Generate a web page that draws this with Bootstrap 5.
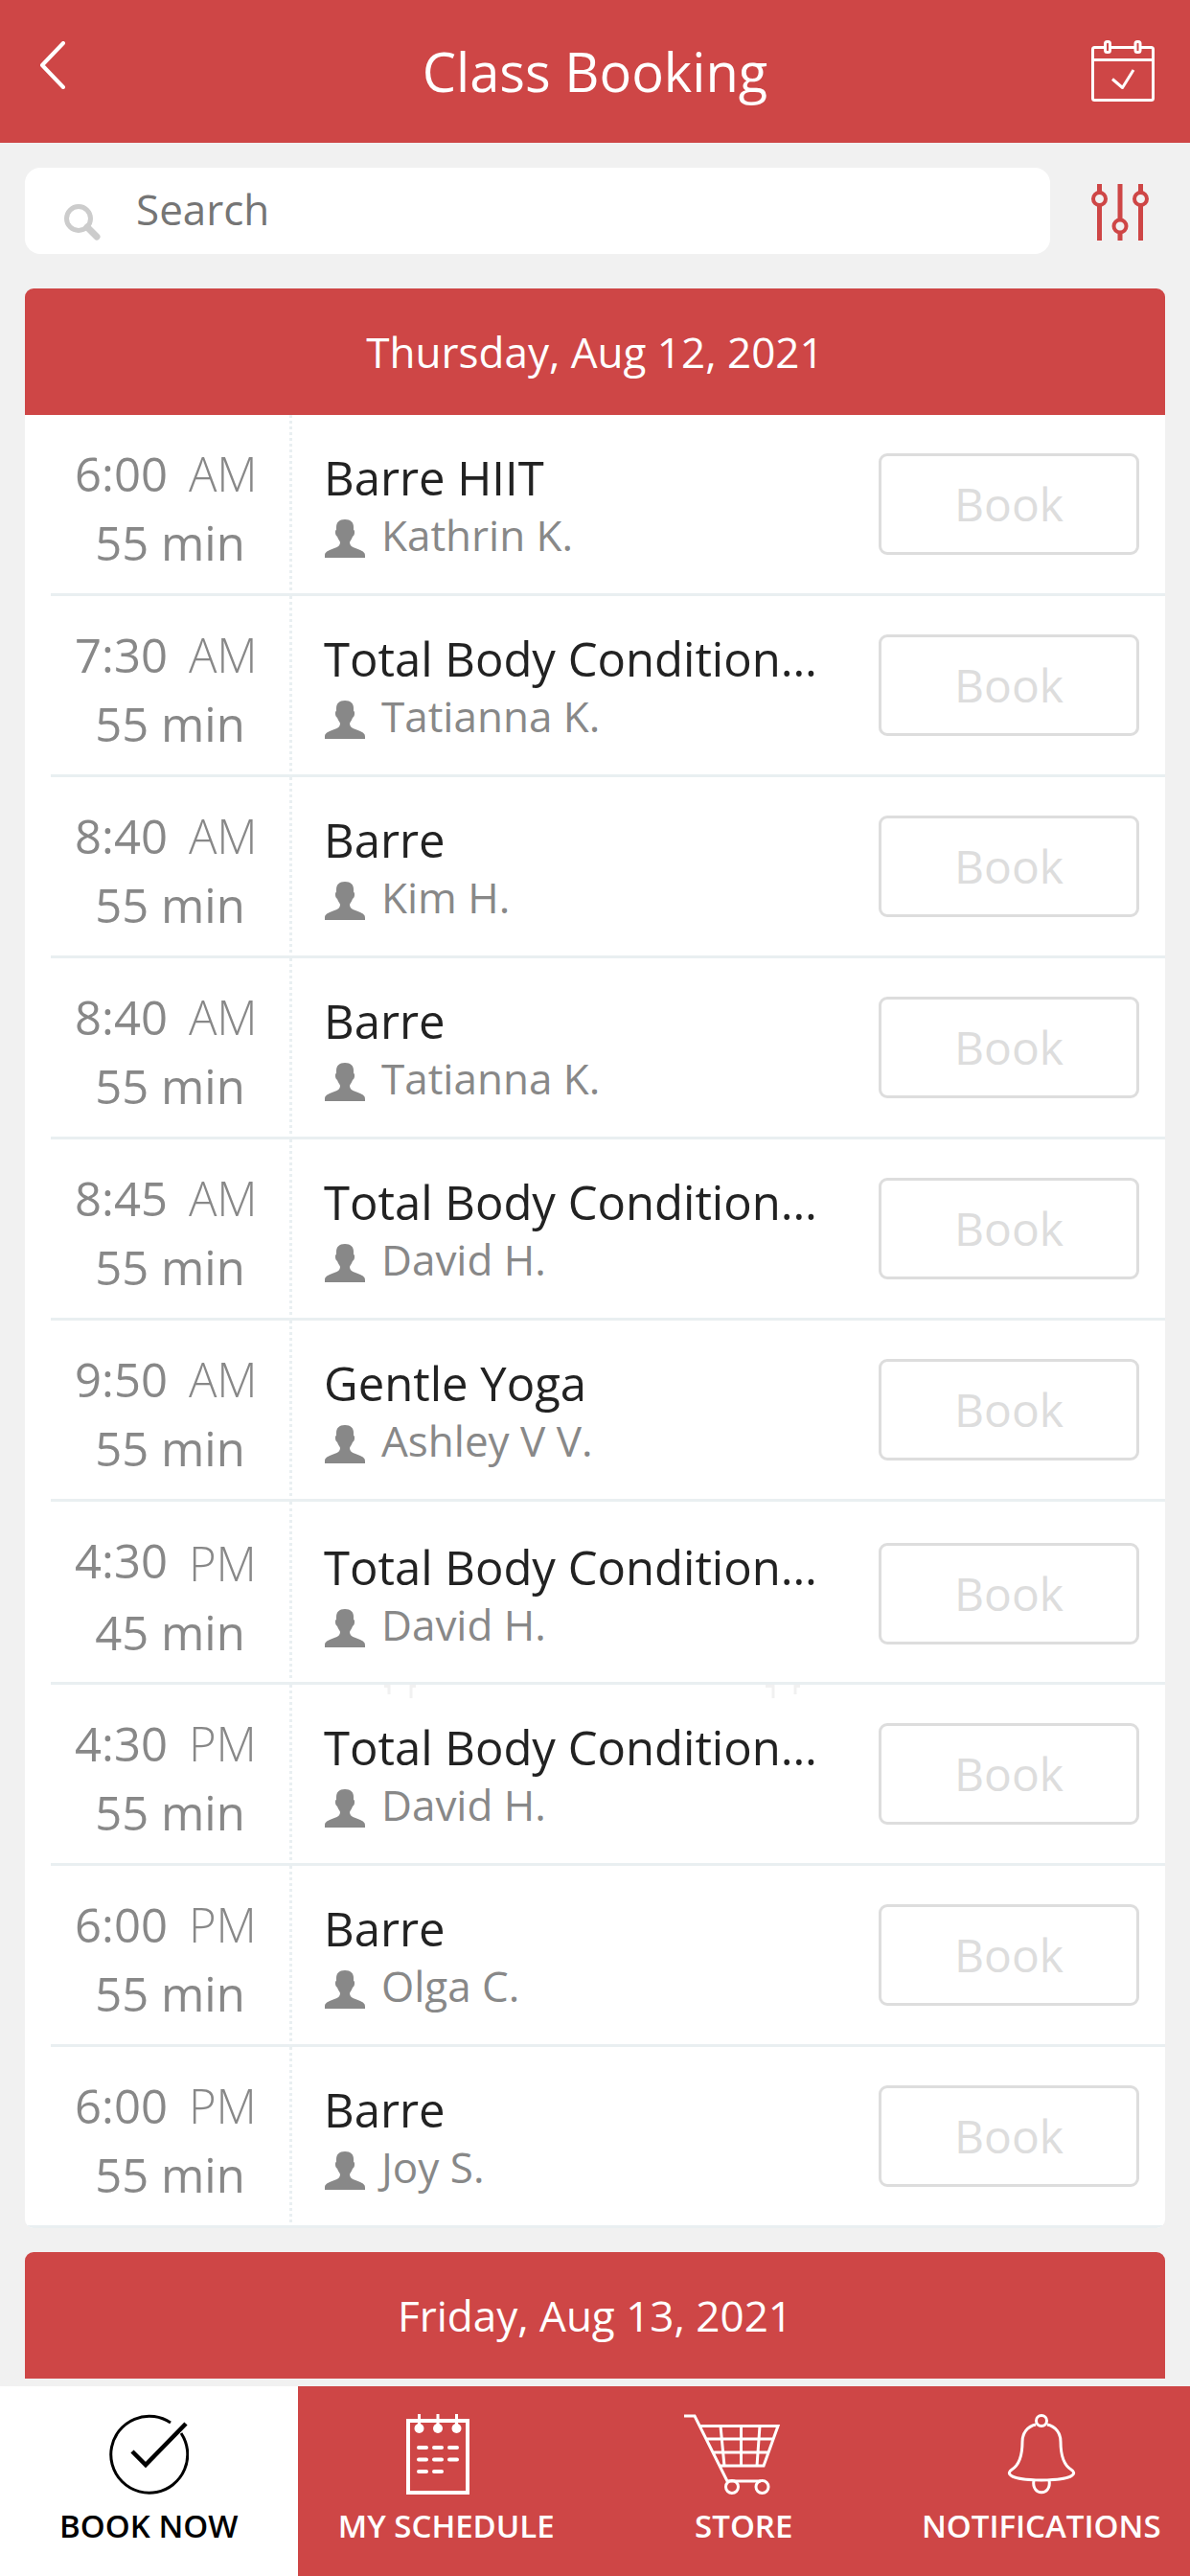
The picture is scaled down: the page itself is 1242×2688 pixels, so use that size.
<!DOCTYPE html>
<html lang="en">
<head>
<meta charset="utf-8">
<meta name="viewport" content="width=device-width, initial-scale=1">
<title>Class Booking</title>
<link href="https://cdn.jsdelivr.net/npm/bootstrap@5.3.0/dist/css/bootstrap.min.css" rel="stylesheet">
<style>
  :root { --brand: #ce4646; --line: #e9eff1; --muted: #888; }
  body { background: #f1f1f1; font-family: "Open Sans", "Noto Sans", sans-serif; color: #222; }
  svg { display: block; flex: none; }
  .brand-bg { background: var(--brand); color: #fff; }
  .top-bar { padding: 36px 37px 37px; }
  .top-bar h1 { font-size: 56px; line-height: 76px; font-weight: 400; }
  .bar-side { width: 72px; }
  .bar-side.back-link { padding: 0 0 12px 3px; }
  .page-body { padding: 26px 26px 8px; }
  .search-line { margin-bottom: 36px; }
  .search-box { height: 90px; border-radius: 16px; padding: 0 40px; }
  .search-box svg { margin-top: 24px; }
  .search-box input { font: inherit; font-size: 44px; line-height: 60px; padding: 0 0 4px 36px; color: #222; outline: 0; }
  .search-box input::placeholder { color: #757575; opacity: 1; }
  .filter-btn { width: 120px; padding: 3px 0 0 43px; }
  .day-head { font-size: 44px; line-height: 60px; font-weight: 400; padding: 36px 0; border-radius: 9px 9px 0 0; }
  .day-block { margin-bottom: 25px; }
  .slots { border-radius: 0 0 9px 9px; overflow: hidden; }
  .slot { height: 189px; }
  .slot::after { content: ""; position: absolute; left: 27px; right: 0; bottom: 0; height: 3px; background: var(--line); }
  .slot:last-child::after { left: 0; }
  .slot-time { width: 279px; padding: 25px 0 0 27px; border-right: 3px dotted var(--line); font-size: 49px; line-height: 72px; color: var(--muted); }
  .slot-clock { gap: 22px; padding-left: 25px; }
  .slot-clock span { font-weight: 300; }
  .slot-info { min-width: 0; padding: 31px 0 0 33px; margin-right: 57px; }
  .slot-info h3 { font-size: 49px; line-height: 68px; font-weight: 400; }
  .slot-coach { font-size: 44px; line-height: 52px; color: var(--muted); gap: 17px; }
  .slot-coach svg { margin: 7px 0 0 1px; }
  .book-btn { width: 272px; height: 106px; margin: 40px 27px 0 0; padding: 0; border: 3px solid #ddd; border-radius: 9px; font-size: 48px; line-height: 66px; }
  .book-btn:disabled { color: #ddd; border-color: #ddd; opacity: 1; }
  .slot-tall { height: 191px; }
  .slot-tall .slot-clock span { padding-top: 3px; }
  .slot-tall .slot-info { padding-top: 34px; }
  .slot-tall .book-btn { margin-top: 43px; }
  .edge-trace { left: 375px; top: 0; }
  .tab-bar { height: 198px; }
  .tab-bar a { padding-top: 29px; gap: 11px; font-size: 33px; line-height: 44px; font-weight: 600; color: #fff; white-space: nowrap; }
  .tab-bar a.current { background: #fff; color: #000; }
</style>
</head>
<body>
<svg width="0" height="0" class="position-absolute" aria-hidden="true">
  <symbol id="person" viewBox="0 0 42 40"><path fill="#888" d="M21 0c6 0 9 3 9 8v3c1 0 1 1 1 3s-1 3-2 4c-1 3-3 5-3 6 0 3 2 5 6 6l5 2c4 2 5 3 5 6v2H0v-2c0-3 1-4 5-6l5-2c4-1 6-3 6-6 0-1-2-3-3-6-1-1-2-2-2-4s0-3 1-3V8c0-5 3-8 9-8z"/></symbol>
</svg>
<div class="d-flex flex-column min-vh-100">
  <header class="brand-bg top-bar d-flex align-items-center justify-content-between">
    <a href="#" class="bar-side back-link" aria-label="Back">
      <svg width="32" height="50" viewBox="0 0 32 50" fill="none" stroke="#fff" stroke-width="4" stroke-linecap="round" stroke-linejoin="round"><path d="M26 2 4 25l22 23"/></svg>
    </a>
    <h1 class="m-0">Class Booking</h1>
    <a href="#" class="bar-side d-flex justify-content-end" aria-label="My bookings">
      <svg width="66" height="64" viewBox="0 0 66 64" fill="none" stroke="#fff" stroke-width="3" stroke-linejoin="round"><path d="M14 7.500H3.500a2 2 0 0 0-2 2V60.500a2 2 0 0 0 2 2h59a2 2 0 0 0 2-2V9.500a2 2 0 0 0-2-2H52M20 7.500H46M2 20.500H64"/><rect x="14.500" y="1.500" width="5" height="11" rx="2"/><rect x="46" y="1.500" width="5" height="11" rx="2"/><path d="M22 40.500 32.500 49.500 44 31"/></svg>
    </a>
  </header>

  <main class="page-body flex-grow-1">
    <div class="search-line d-flex align-items-center">
      <label class="search-box bg-white d-flex align-items-center flex-grow-1">
        <svg width="40" height="40" viewBox="0 0 40 40" fill="none" stroke="#ccc"><circle cx="16" cy="16" r="12.500" stroke-width="5"/><path d="M25 25 35 35" stroke-width="7" stroke-linecap="round"/></svg>
        <input type="search" class="border-0 bg-transparent flex-grow-1" placeholder="Search" aria-label="Search classes">
      </label>
      <button type="button" class="filter-btn border-0 bg-transparent" aria-label="Filter">
        <svg width="60" height="60" viewBox="0 0 60 60" fill="none" stroke="#ce4646" stroke-width="5"><path d="M8.500 0V9M8.500 23V59M30 0V37M30 52V59M51.500 0V9M51.500 23V59"/><circle cx="8.500" cy="15.500" r="6.500" stroke-width="4"/><circle cx="30" cy="44" r="6.500" stroke-width="4"/><circle cx="51.500" cy="15.500" r="6.500" stroke-width="4"/></svg>
      </button>
    </div>

    <section class="day-block">
      <h2 class="day-head brand-bg text-center m-0">Thursday, Aug 12, 2021</h2>
      <ul class="slots bg-white list-unstyled m-0">
        <li class="slot d-flex align-items-start position-relative">
          <div class="slot-time flex-shrink-0 h-100"><div class="slot-clock d-flex">6:00<span>AM</span></div><div class="text-center">55 min</div></div>
          <div class="slot-info flex-fill"><h3 class="text-truncate m-0">Barre HIIT</h3><div class="slot-coach d-flex align-items-center"><svg width="42" height="40"><use href="#person"/></svg>Kathrin K.</div></div>
          <button type="button" class="btn book-btn flex-shrink-0" disabled>Book</button>
        </li>
        <li class="slot d-flex align-items-start position-relative">
          <div class="slot-time flex-shrink-0 h-100"><div class="slot-clock d-flex">7:30<span>AM</span></div><div class="text-center">55 min</div></div>
          <div class="slot-info flex-fill"><h3 class="text-truncate m-0">Total Body Conditioning</h3><div class="slot-coach d-flex align-items-center"><svg width="42" height="40"><use href="#person"/></svg>Tatianna K.</div></div>
          <button type="button" class="btn book-btn flex-shrink-0" disabled>Book</button>
        </li>
        <li class="slot d-flex align-items-start position-relative">
          <div class="slot-time flex-shrink-0 h-100"><div class="slot-clock d-flex">8:40<span>AM</span></div><div class="text-center">55 min</div></div>
          <div class="slot-info flex-fill"><h3 class="text-truncate m-0">Barre</h3><div class="slot-coach d-flex align-items-center"><svg width="42" height="40"><use href="#person"/></svg>Kim H.</div></div>
          <button type="button" class="btn book-btn flex-shrink-0" disabled>Book</button>
        </li>
        <li class="slot d-flex align-items-start position-relative">
          <div class="slot-time flex-shrink-0 h-100"><div class="slot-clock d-flex">8:40<span>AM</span></div><div class="text-center">55 min</div></div>
          <div class="slot-info flex-fill"><h3 class="text-truncate m-0">Barre</h3><div class="slot-coach d-flex align-items-center"><svg width="42" height="40"><use href="#person"/></svg>Tatianna K.</div></div>
          <button type="button" class="btn book-btn flex-shrink-0" disabled>Book</button>
        </li>
        <li class="slot d-flex align-items-start position-relative">
          <div class="slot-time flex-shrink-0 h-100"><div class="slot-clock d-flex">8:45<span>AM</span></div><div class="text-center">55 min</div></div>
          <div class="slot-info flex-fill"><h3 class="text-truncate m-0">Total Body Conditioning</h3><div class="slot-coach d-flex align-items-center"><svg width="42" height="40"><use href="#person"/></svg>David H.</div></div>
          <button type="button" class="btn book-btn flex-shrink-0" disabled>Book</button>
        </li>
        <li class="slot d-flex align-items-start position-relative">
          <div class="slot-time flex-shrink-0 h-100"><div class="slot-clock d-flex">9:50<span>AM</span></div><div class="text-center">55 min</div></div>
          <div class="slot-info flex-fill"><h3 class="text-truncate m-0">Gentle Yoga</h3><div class="slot-coach d-flex align-items-center"><svg width="42" height="40"><use href="#person"/></svg>Ashley V V.</div></div>
          <button type="button" class="btn book-btn flex-shrink-0" disabled>Book</button>
        </li>
        <li class="slot slot-tall d-flex align-items-start position-relative">
          <div class="slot-time flex-shrink-0 h-100"><div class="slot-clock d-flex">4:30<span>PM</span></div><div class="text-center">45 min</div></div>
          <div class="slot-info flex-fill"><h3 class="text-truncate m-0">Total Body Conditioning</h3><div class="slot-coach d-flex align-items-center"><svg width="42" height="40"><use href="#person"/></svg>David H.</div></div>
          <button type="button" class="btn book-btn flex-shrink-0" disabled>Book</button>
        </li>
        <li class="slot d-flex align-items-start position-relative">
          <svg class="edge-trace position-absolute" width="434" height="14" fill="none" stroke="#f1f1f1" stroke-width="3" aria-hidden="true"><path d="M0 1.500H5V10M33 1.500H28V14M398 1.500H406V14M434 1.500H429V10"/></svg>
          <div class="slot-time flex-shrink-0 h-100"><div class="slot-clock d-flex">4:30<span>PM</span></div><div class="text-center">55 min</div></div>
          <div class="slot-info flex-fill"><h3 class="text-truncate m-0">Total Body Conditioning</h3><div class="slot-coach d-flex align-items-center"><svg width="42" height="40"><use href="#person"/></svg>David H.</div></div>
          <button type="button" class="btn book-btn flex-shrink-0" disabled>Book</button>
        </li>
        <li class="slot d-flex align-items-start position-relative">
          <div class="slot-time flex-shrink-0 h-100"><div class="slot-clock d-flex">6:00<span>PM</span></div><div class="text-center">55 min</div></div>
          <div class="slot-info flex-fill"><h3 class="text-truncate m-0">Barre</h3><div class="slot-coach d-flex align-items-center"><svg width="42" height="40"><use href="#person"/></svg>Olga C.</div></div>
          <button type="button" class="btn book-btn flex-shrink-0" disabled>Book</button>
        </li>
        <li class="slot d-flex align-items-start position-relative">
          <div class="slot-time flex-shrink-0 h-100"><div class="slot-clock d-flex">6:00<span>PM</span></div><div class="text-center">55 min</div></div>
          <div class="slot-info flex-fill"><h3 class="text-truncate m-0">Barre</h3><div class="slot-coach d-flex align-items-center"><svg width="42" height="40"><use href="#person"/></svg>Joy S.</div></div>
          <button type="button" class="btn book-btn flex-shrink-0" disabled>Book</button>
        </li>
      </ul>
    </section>

    <section>
      <h2 class="day-head brand-bg text-center m-0">Friday, Aug 13, 2021</h2>
    </section>
  </main>

  <nav class="tab-bar brand-bg sticky-bottom row g-0" aria-label="Main">
    <a href="#" class="current col-3 d-flex flex-column align-items-center text-decoration-none" aria-current="page">
      <svg width="84" height="84" viewBox="0 0 84 84" fill="none" stroke="#000" stroke-width="3"><path d="M65 9A40 40 0 1 0 76 20"/><path d="M25 39 39 53 81 10" stroke-width="4.500"/></svg>
      BOOK NOW
    </a>
    <a href="#" class="col-3 d-flex flex-column align-items-center text-decoration-none">
      <svg width="84" height="84" viewBox="9 0 84 84" fill="none" stroke="#fff" stroke-width="4"><path d="M11 7H73V82H11z"/><path d="M22.500 0V14M42 0V14M61.500 0V14" stroke-width="3"/><g fill="#fff" stroke="none"><circle cx="22.500" cy="15" r="5"/><circle cx="42" cy="15" r="5"/><circle cx="61.500" cy="15" r="5"/></g><path stroke-linecap="round" d="M22 35H30M38 35H46M54 35H62M22 47.500H30M38 47.500H46M54 47.500H62M22 60H30M38 60H46"/></svg>
      MY SCHEDULE
    </a>
    <a href="#" class="col-3 d-flex flex-column align-items-center text-decoration-none">
      <svg width="124" height="84" viewBox="0 0 124 84" fill="none" stroke="#fff" stroke-width="3"><path d="M0 2H11L45 70H80M16 12.500H98L83 54H37M23 26H93M30 40H88M38 12.500 42 54M59.500 12.500V54M79 12.500 76 54"/><circle cx="50" cy="76" r="6.500"/><circle cx="81.500" cy="76" r="6.500"/></svg>
      STORE
    </a>
    <a href="#" class="col-3 d-flex flex-column align-items-center text-decoration-none">
      <svg width="84" height="84" viewBox="0 0 84 84" fill="none" stroke="#fff" stroke-width="3"><circle cx="42" cy="7" r="5.500"/><path d="M36 11C27 13 22 20 22 29 22 42 19 53 11 58 8 60 8 62 9 63 14 71 70 71 75 63 76 62 76 60 73 58 65 53 62 42 62 29 62 20 57 13 48 11"/><path d="M34 69c-3 17 19 17 16 0"/></svg>
      NOTIFICATIONS
    </a>
  </nav>
</div>
<script src="https://cdn.jsdelivr.net/npm/bootstrap@5.3.0/dist/js/bootstrap.bundle.min.js"></script>
</body>
</html>
